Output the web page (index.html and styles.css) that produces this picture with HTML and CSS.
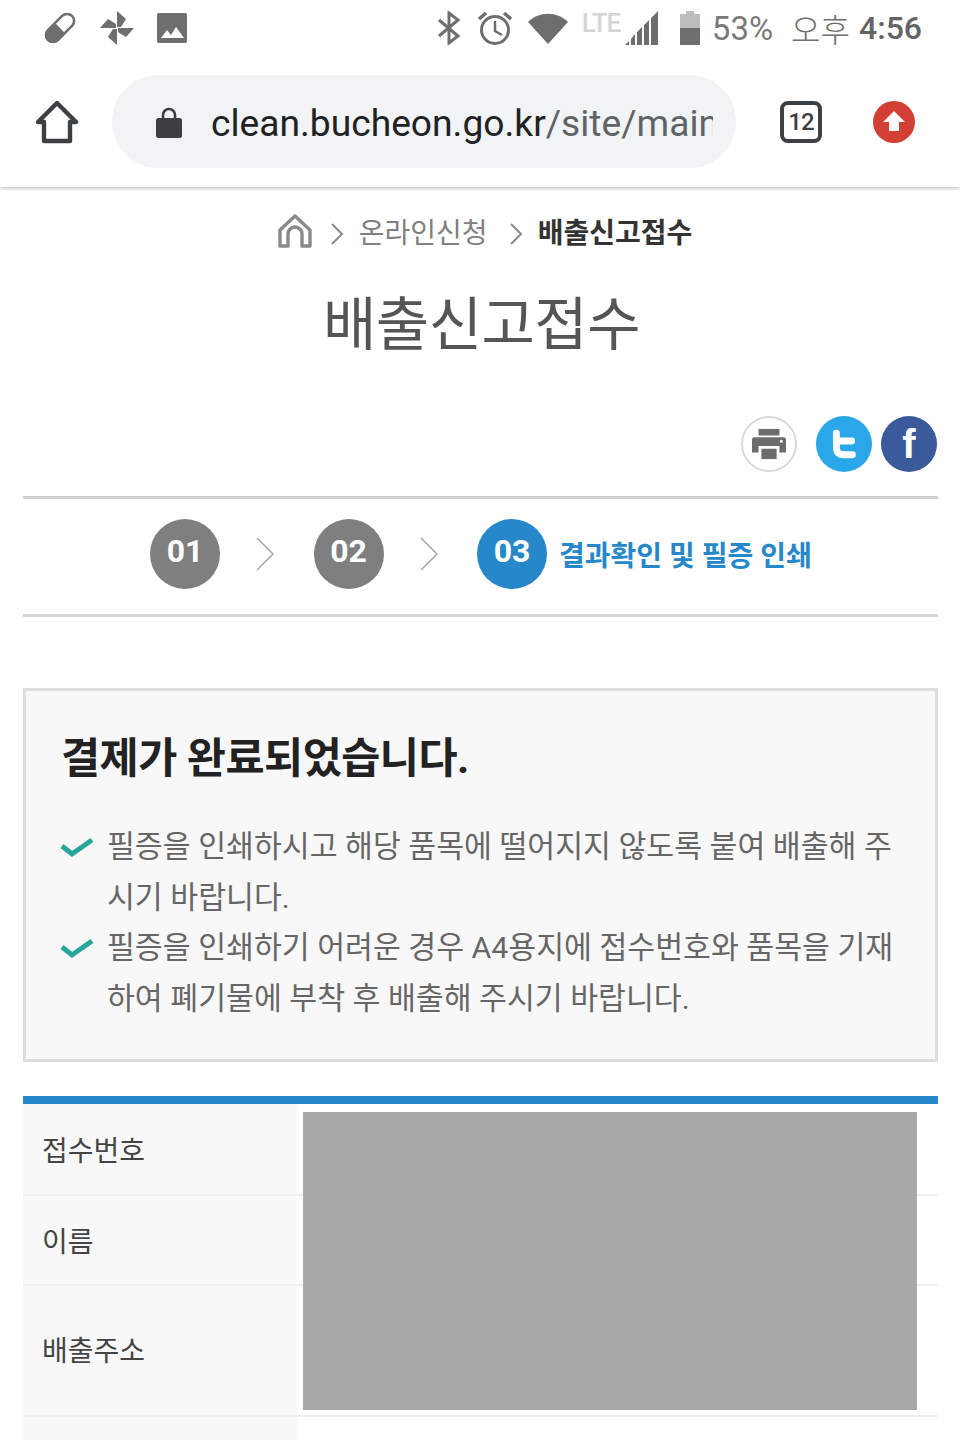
FILE: index.html
```html
<!DOCTYPE html>
<html lang="ko">
<head>
  <meta charset="UTF-8" />
  <meta name="viewport" content="width=device-width, initial-scale=1.0" />
  <title>배출신고접수</title>
  <link rel="stylesheet" href="styles.css">
</head>
<body>

  <!-- Status bar -->
  <div class="statusbar">
    <div class="status-left">
      <svg width="36" height="36" viewBox="0 0 36 36"><g transform="rotate(45 18 18)"><rect x="11" y="1" width="14" height="34" rx="7" fill="none" stroke="#6e6e6e" stroke-width="2.5"/><path d="M10 18h16v10a8 8 0 0 1-16 0z" fill="#6e6e6e"/></g></svg>
      <svg width="36" height="36" viewBox="0 0 36 36" fill="#6e6e6e"><path d="M18 17V1l9 8-5 8zM19 18h16l-8 9-8-5zM18 19v16l-9-8 5-8zM17 18H1l8-9 8 5z"/></svg>
      <svg width="32" height="32" viewBox="0 0 32 32"><rect x="1" y="1" width="30" height="30" rx="2" fill="#6e6e6e"/><path d="M5 26l6-8 4 5 5-8 8 11z" fill="#fff"/></svg>
    </div>
    <div class="status-right">
      <svg class="st-bt" width="24" height="34" viewBox="0 0 24 34" fill="none" stroke="#6e6e6e" stroke-width="3"><path d="M2 9l19 16-9 7V2l9 7L2 25"/></svg>
      <svg class="st-alarm" width="36" height="36" viewBox="0 0 36 36" fill="none" stroke="#6e6e6e" stroke-width="3"><circle cx="18" cy="20" r="13.5"/><path d="M18 11v10l7 4" stroke-width="2.5"/><path d="M2 9l7-6M34 9l-7-6" stroke-width="3.5"/></svg>
      <svg class="st-wifi" width="42" height="34" viewBox="0 0 42 34"><path d="M1 11C12 0 30 0 41 11L21 33z" fill="#6e6e6e"/></svg>
      <span class="st-lte">LTE</span>
      <svg class="st-signal" width="36" height="36" viewBox="0 0 36 36" fill="#6e6e6e"><path d="M1 35l4-4v4zM7 35v-6l4-5v11zM13 35V22l5-5v18zM20 35V15l5-5v25zM27 35V8l7-7v34z"/></svg>
      <svg class="st-batt" width="20" height="36" viewBox="0 0 20 36"><path d="M6 1h8v3h6v14H0V4h6z" fill="#bdbdbd"/><path d="M0 18h20v17H0z" fill="#6e6e6e"/></svg>
      <span class="st-pct">53%</span>
      <span class="st-ampm">오후</span>
      <span class="st-time">4:56</span>
    </div>
  </div>

  <!-- Browser toolbar -->
  <div class="toolbar">
    <svg class="tb-home" width="44" height="44" viewBox="0 0 44 44" fill="none" stroke="#3c4043" stroke-width="4.4" stroke-linejoin="round"><path d="M3 22L22 3l19 19h-6v19H9V22z"/></svg>
    <div class="urlbar">
      <svg width="26" height="32" viewBox="0 0 26 32"><path d="M7 14V9a6 6 0 0 1 12 0v5" fill="none" stroke="#3c4043" stroke-width="2.6"/><rect y="12" width="26" height="20" rx="2.5" fill="#3c4043"/></svg>
      <div class="url"><span class="url-host">clean.bucheon.go.kr</span>/site/main</div>
    </div>
    <div class="tabcount">12</div>
    <svg class="tb-update" width="42" height="42" viewBox="0 0 42 42"><circle cx="21" cy="21" r="21" fill="#d23f35"/><path d="M21 10l11 11h-6v9H16v-9h-6z" fill="#fff"/></svg>
  </div>

  <div class="page">

    <!-- Breadcrumb -->
    <div class="crumbs">
      <svg width="34" height="34" viewBox="0 0 34 34" fill="none" stroke="#8a8a8a" stroke-width="3.4" stroke-linejoin="round"><path d="M2 16L17 2l15 14v16h-8V20a5 5 0 0 0-14 0v12H2z"/></svg>
      <svg class="crumb-sep" width="14" height="24" viewBox="0 0 14 24" fill="none" stroke="#8a8a8a" stroke-width="2"><path d="M2 2l10 10L2 22"/></svg>
      <span class="crumb">온라인신청</span>
      <svg class="crumb-sep" width="14" height="24" viewBox="0 0 14 24" fill="none" stroke="#8a8a8a" stroke-width="2"><path d="M2 2l10 10L2 22"/></svg>
      <strong class="crumb-on">배출신고접수</strong>
    </div>

    <h1 class="title">배출신고접수</h1>

    <!-- Share icons -->
    <div class="share">
      <div class="share-print">
        <svg width="36" height="32" viewBox="0 0 36 32" fill="#6d6d6d"><path d="M7 0h22v7H7zM3 9h30a3 3 0 0 1 3 3v13h-7v-7H7v7H0V12a3 3 0 0 1 3-3z"/><path d="M10 21h16v11H10z"/><circle cx="31" cy="13" r="1.6" fill="#fff"/></svg>
      </div>
      <div class="share-tw">
        <svg width="26" height="32" viewBox="0 0 34 38" fill="none" stroke="#fff" stroke-width="9" stroke-linecap="round" stroke-linejoin="round"><path d="M7 5v19c0 6 3 9 9 9h12M7 15h20"/></svg>
      </div>
      <div class="share-fb">f</div>
    </div>

    <!-- Steps -->
    <div class="steps">
      <div class="step-num">01</div>
      <svg class="step-arrow" width="20" height="36" viewBox="0 0 20 36" fill="none" stroke="#aaa" stroke-width="1.6"><path d="M2 2l16 16L2 34"/></svg>
      <div class="step-num">02</div>
      <svg class="step-arrow" width="20" height="36" viewBox="0 0 20 36" fill="none" stroke="#aaa" stroke-width="1.6"><path d="M2 2l16 16L2 34"/></svg>
      <div class="step-num step-on">03</div>
      <div class="step-label">결과확인 및 필증 인쇄</div>
    </div>

    <!-- Notice box -->
    <div class="notice">
      <h2 class="notice-title">결제가 완료되었습니다.</h2>
      <ul class="notice-list">
        <li>
          <svg class="check" width="34" height="24" viewBox="0 0 34 24" fill="none" stroke="#27a79a" stroke-width="5"><path d="M2 11l10 8L32 5"/></svg>
          <span>필증을 인쇄하시고 해당 품목에 떨어지지 않도록 붙여 배출해 주시기 바랍니다.</span>
        </li>
        <li>
          <svg class="check" width="34" height="24" viewBox="0 0 34 24" fill="none" stroke="#27a79a" stroke-width="5"><path d="M2 11l10 8L32 5"/></svg>
          <span>필증을 인쇄하기 어려운 경우 A4용지에 접수번호와 품목을 기재하여 폐기물에 부착 후 배출해 주시기 바랍니다.</span>
        </li>
      </ul>
    </div>

    <!-- Result table -->
    <div class="result">
      <div class="row row-a"><div class="row-head">접수번호</div></div>
      <div class="row row-b"><div class="row-head">이름</div></div>
      <div class="row row-c"><div class="row-head">배출주소</div></div>
      <div class="row row-d"><div class="row-head"></div></div>
      <div class="redacted"></div>
    </div>

  </div>

</body>
</html>
```

FILE: styles.css
```css
html, body {
  margin: 0;
  height: 1440px;
  overflow: hidden;
}
body {
  background-color: #fff;
  color: #444;
  font-family: "Roboto", "Noto Sans CJK KR", sans-serif;
}
h1, h2, ul {
  margin: 0;
  padding: 0;
}

/* status bar */
.statusbar {
  height: 56px;
  display: flex;
  justify-content: space-between;
  align-items: center;
  padding: 0 38px 0 42px;
  color: #6e6e6e;
  background-color: #fff;
  position: relative;
  z-index: 1;
}
.status-left {
  display: flex;
  align-items: center;
  gap: 21px;
}
.status-right {
  display: flex;
  align-items: center;
}
.st-bt { margin-right: 16px; }
.st-alarm { margin-right: 14px; }
.st-wifi { margin-right: 13px; }
.st-lte {
  font-size: 26px;
  color: #d4d4d4;
  font-weight: 500;
  letter-spacing: -1px;
  align-self: flex-start;
  margin-top: 3px;
  width: 42px;
  height: 30px;
}
.st-signal { margin-right: 20px; }
.st-batt { margin-right: 12px; }
.st-pct {
  font-size: 33px;
  margin-right: 18px;
  color: #7a7a7a;
}
.st-ampm {
  font-size: 32px;
  margin-right: 9px;
  color: #6e6e6e;
  font-weight: 300;
}
.st-time {
  font-size: 32px;
  font-weight: 500;
  color: #646464;
}

/* browser toolbar */
.toolbar {
  height: 131px;
  display: flex;
  align-items: center;
  padding-left: 35px;
  box-shadow: 0 2px 3px rgba(0, 0, 0, 0.2);
  position: relative;
}
.tb-home {
  margin-right: 33px;
  margin-top: 1px;
}
.urlbar {
  width: 624px;
  height: 93px;
  border-radius: 47px;
  background-color: #f1f3f4;
  display: flex;
  align-items: center;
  box-sizing: border-box;
  padding-left: 44px;
  overflow: hidden;
}
.url {
  margin-left: 29px;
  margin-top: 3px;
  width: 502px;
  overflow: hidden;
  white-space: nowrap;
  font-size: 37.2px;
  color: #5f6368;
}
.url-host { color: #202124; }
.tabcount {
  width: 42px;
  height: 42px;
  box-sizing: border-box;
  margin-left: 44px;
  border: 4px solid #3c4043;
  border-radius: 8px;
  font-size: 24px;
  font-weight: 500;
  line-height: 34px;
  text-align: center;
  letter-spacing: -1px;
  color: #3c4043;
}
.tb-update {
  margin-left: 51px;
}

/* page */
.page {
  padding: 0 22px 0 23px;
}
.crumbs {
  height: 88px;
  display: flex;
  align-items: center;
  justify-content: center;
  font-size: 28px;
  padding-left: 9px;
}
.crumb-sep { margin: 6px 15px 0 18px; }
.crumb {
  color: #808080;
  font-weight: 400;
  margin-right: 3px;
}
.crumb-on {
  color: #333;
  font-size: 28px;
  font-weight: 700;
}
.title {
  text-align: center;
  font-size: 58px;
  line-height: 80px;
  font-weight: 400;
  color: #555;
  letter-spacing: -0.5px;
  margin-top: 10px;
  padding-left: 2px;
}

/* share icons */
.share {
  display: flex;
  justify-content: flex-end;
  align-items: center;
  margin-top: 50px;
  height: 58px;
  padding-right: 1px;
}
.share > div {
  width: 56px;
  height: 56px;
  border-radius: 50%;
  box-sizing: border-box;
  display: flex;
  align-items: center;
  justify-content: center;
}
.share-print {
  border: 2px solid #d8d8d8;
  margin-right: 19px;
}
.share-print svg { transform: scale(0.95); }
.share-tw {
  background-color: #29a7e8;
  margin-right: 9px;
}
.share-fb {
  background-color: #3a5a9b;
  color: #fff;
  font-family: "Liberation Sans", sans-serif;
  font-size: 40px;
  font-weight: 700;
}

/* steps */
.steps {
  margin-top: 23px;
  height: 110px;
  padding-bottom: 5px;
  border-top: 3px solid #d2d2d2;
  border-bottom: 3px solid #d8d8d8;
  display: flex;
  align-items: center;
  padding-left: 127px;
}
.step-num {
  width: 70px;
  height: 70px;
  border-radius: 50%;
  background-color: #7f7f7f;
  color: #fff;
  font-size: 32px;
  font-weight: 700;
  line-height: 65px;
  text-align: center;
}
.step-arrow { margin: 0 38.5px 0 35px; }
.step-on {
  background-color: #2688c9;
}
.step-label {
  margin-left: 12px;
  color: #2688c9;
  font-size: 28px;
  font-weight: 700;
}

/* notice box */
.notice {
  margin-top: 71px;
  height: 374px;
  box-sizing: border-box;
  border: 3px solid #dedede;
  background-color: #f8f8f8;
  padding: 40px 34px 0 34px;
}
.notice-title {
  font-size: 42.5px;
  line-height: 56px;
  font-weight: 700;
  color: #222;
  letter-spacing: -0.5px;
  margin-left: 1px;
}
.notice-list {
  list-style: none;
  margin-top: 35px;
}
.notice-list li {
  display: flex;
  align-items: flex-start;
  font-size: 30.3px;
  line-height: 50.6px;
  color: #666;
  font-weight: 400;
}
.check {
  flex: none;
  margin: 13px 13px 0 0;
}

/* result table */
.result {
  position: relative;
  margin-top: 34px;
  border-top: 8px solid #2688c9;
}
.row {
  border-bottom: 2px solid #f0f0f0;
  box-sizing: border-box;
}
.row-a { height: 92px; }
.row-b { height: 90px; }
.row-c { height: 131px; }
.row-c .row-head { padding-bottom: 4px; }
.row-d {
  height: 40px;
  border-bottom: 0;
}
.row-head {
  width: 274px;
  height: 100%;
  box-sizing: border-box;
  background-color: #f8f8f8;
  padding-left: 19px;
  display: flex;
  align-items: center;
  font-size: 28px;
  color: #444;
}
.redacted {
  position: absolute;
  left: 280px;
  top: 8px;
  width: 614px;
  height: 298px;
  background-color: #a9a9a9;
}
```
